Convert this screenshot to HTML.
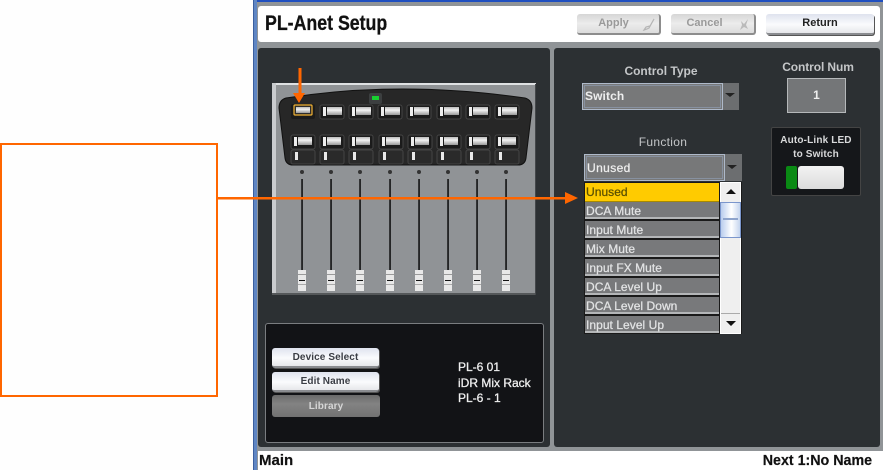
<!DOCTYPE html>
<html><head><meta charset="utf-8"><style>
html,body{margin:0;padding:0;background:#fefefe}
#r{position:relative;width:883px;height:470px;overflow:hidden;background:#fefefe;font-family:"Liberation Sans",sans-serif}
#r div{position:absolute;box-sizing:border-box;white-space:nowrap}
svg{position:absolute;left:0;top:0}
.btn{border-radius:3px;text-align:center;font-weight:bold;font-size:10px;letter-spacing:.1px}
.lite{background:linear-gradient(#dfe3ee,#fafbfd 55%,#e6e7ea);color:#3a3d44;border-bottom:2px solid #8a8c90;box-shadow:1px 1px 0 #555}
.off{background:linear-gradient(#d6d6d6,#ececec 50%,#dcdcdc);color:#9a9a9a;border-bottom:2px solid #8d8d8d;border-right:2px solid #8d8d8d}
.lab{color:#c4c6c8;font-size:12px;font-weight:bold;text-align:center}
.row{left:585px;width:134px;height:17px;background:#78797b;border-bottom:2px solid #b4b6b8;color:#e2e3e4;font-size:12px;-webkit-text-stroke:.25px #e2e3e4;line-height:19px;padding-left:1px;letter-spacing:.05px}
</style></head><body><div id="r">
<div style="left:253px;top:0;width:630px;height:470px;background:#909497"></div>
<div style="left:253px;top:0;width:630px;height:2px;background:#1f4fc0"></div>
<div style="left:253px;top:0;width:4px;height:470px;background:#5f86c4;border-left:1px solid #3b5f9e"></div>
<div style="left:258px;top:6px;width:622px;height:36px;background:#fff;border-radius:3px"></div>
<div style="left:265px;top:11px;font-size:21px;font-weight:bold;color:#111;line-height:26px;-webkit-text-stroke:.3px #111;transform:scaleX(.845);transform-origin:left">PL-Anet Setup</div>
<div class="btn off" style="left:577px;top:14px;width:84px;height:21px;line-height:19px;padding-right:9px;font-size:11px;letter-spacing:0">Apply</div>
<div class="btn off" style="left:671px;top:14px;width:85px;height:21px;line-height:19px;padding-right:16px;font-size:11px;letter-spacing:0">Cancel</div>
<div class="btn lite" style="left:766px;top:14px;width:108px;height:21px;line-height:19px;color:#222;font-size:11px;letter-spacing:0">Return</div>
<svg width="883" height="470">
<path d="M644 30l3-1 2-1 5-9-4 7-4 1z" fill="none" stroke="#b5b5b5" stroke-width="1.2"/>
<path d="M741 21l3 3 4-5-2 6 2 4-4-2-4 3 2-5z" fill="#bbb"/>
</svg>
<div style="left:258px;top:48px;width:292px;height:399px;background:#2c3033;border-radius:3px"></div>
<div style="left:554px;top:48px;width:326px;height:399px;background:#2c3033;border-radius:3px"></div>

<svg width="883" height="470">
<defs>
<linearGradient id="g" x1="0" y1="0" x2="0" y2="1"><stop offset="0" stop-color="#bbb"/><stop offset=".4" stop-color="#f2f2f2"/><stop offset="1" stop-color="#999"/></linearGradient>
<g id="top"><rect x="0" y="0" width="24" height="14" rx="2" fill="#1b1b1b" stroke="#444"/><rect x="3" y="2" width="3" height="9" fill="#eee"/><rect x="7" y="2" width="15" height="8" fill="url(#g)"/></g>
<g id="col"><rect x="291" y="135" width="24" height="14" rx="2" fill="#1b1b1b" stroke="#444"/><rect x="294" y="137" width="3" height="9" fill="#eee"/><rect x="298" y="137" width="14" height="8" fill="url(#g)"/>
<rect x="291" y="150" width="24" height="14" rx="2" fill="#2a2a2a" stroke="#444"/><rect x="295" y="152" width="3" height="8" fill="#e8e8e8"/>
<circle cx="302" cy="172" r="2" fill="#333"/><rect x="301.300" y="179" width="1.500" height="91" fill="#0a0a0a"/>
<rect x="298" y="270" width="8" height="21" fill="#e8e8e8"/><rect x="298" y="274" width="8" height="1" fill="#999"/><rect x="299" y="280" width="6" height="1" fill="#111"/><rect x="298" y="284" width="8" height="1" fill="#aaa"/></g>
</defs>
<rect x="272" y="83" width="264" height="211" fill="#909396"/>
<rect x="272" y="83" width="264" height="2" fill="#dfe1e3"/>
<rect x="272" y="83" width="4" height="211" fill="#c9cbce"/>
<rect x="272" y="293" width="264" height="2" fill="#55585a"/>
<rect x="535" y="84" width="1" height="211" fill="#44474a"/>
<path d="M286 98Q400 80 525 98Q532 100 532 108L526 158Q525 165 518 165H293Q286 165 285 158L279 108Q279 100 286 98Z" fill="#272727" stroke="#111"/>
<rect x="369" y="93" width="13" height="11" rx="2" fill="#3c3f40"/>
<rect x="372" y="96" width="7" height="4" fill="#18d030"/>
<rect x="291" y="104" width="24" height="15" rx="2" fill="#1b1b1b"/>
<rect x="294" y="105" width="18" height="10" rx="1" fill="#2d2d2d" stroke="#f2b233" stroke-width="1.2"/><rect x="296" y="107" width="14" height="6" fill="url(#g)"/>
<use href="#top" x="320" y="105"/><use href="#top" x="349" y="105"/><use href="#top" x="378" y="105"/><use href="#top" x="407" y="105"/><use href="#top" x="437" y="105"/><use href="#top" x="466" y="105"/><use href="#top" x="495" y="105"/>
<use href="#col"/><use href="#col" x="29"/><use href="#col" x="58"/><use href="#col" x="88"/><use href="#col" x="117"/><use href="#col" x="146"/><use href="#col" x="175"/><use href="#col" x="204"/>
</svg>

<div style="left:265px;top:323px;width:279px;height:120px;background:#121316;border:1px solid #7a7d80;border-radius:3px"></div>
<div class="btn lite" style="left:272px;top:348px;width:107px;height:20px;line-height:20px">Device Select</div>
<div class="btn lite" style="left:272px;top:372px;width:107px;height:20px;line-height:20px">Edit Name</div>
<div class="btn" style="left:272px;top:395px;width:108px;height:22px;line-height:24px;background:linear-gradient(#6a6a6a,#838383 40%,#727272);color:#d6d6d6">Library</div>
<div style="left:458px;top:360px;color:#eee;font-size:12px;line-height:15.5px;-webkit-text-stroke:.3px #eee;letter-spacing:0">PL-6 01<br>iDR Mix Rack<br>PL-6 - 1</div>

<div class="lab" style="left:582px;top:64px;width:158px">Control Type</div>
<div style="left:582px;top:83px;width:157px;height:27px;background:#6c6e70"></div>
<div style="left:582px;top:83px;width:141px;height:27px;background:#777879;border:1px solid #aeb9c9;outline:1px solid #8791a0;outline-offset:-3px;color:#eee;font-size:12px;font-weight:bold;line-height:25px;padding-left:2px;letter-spacing:.1px">Switch</div>
<div class="lab" style="left:770px;top:60px;width:96px;letter-spacing:-.1px">Control Num</div>
<div style="left:787px;top:78px;width:59px;height:35px;background:#747678;border:1px solid #b5b8ba;color:#eee;font-size:12px;font-weight:bold;text-align:center;line-height:33px">1</div>
<div class="lab" style="left:584px;top:135px;width:158px;font-weight:normal;letter-spacing:.3px">Function</div>
<div style="left:584px;top:154px;width:158px;height:27px;background:#6c6e70"></div>
<div style="left:584px;top:154px;width:141px;height:27px;background:#777879;border:1px solid #aeb9c9;outline:1px solid #8791a0;outline-offset:-3px;color:#eee;font-size:12px;line-height:26px;padding-left:2px;-webkit-text-stroke:.25px #eee;letter-spacing:.4px">Unused</div>
<div style="left:771px;top:127px;width:90px;height:69px;background:#15171a;border:1px solid #444;border-radius:2px"></div>
<div style="left:771px;top:134px;width:90px;text-align:center;color:#d8d9da;font-size:10px;font-weight:bold;line-height:14px;letter-spacing:.15px">Auto-Link LED<br>to Switch</div>
<div style="left:786px;top:166px;width:11px;height:23px;background:#0a8a14;border-radius:2px"></div>
<div style="left:798px;top:166px;width:46px;height:23px;background:linear-gradient(#f2f2f2,#dcdcdc);border-radius:3px"></div>

<div style="left:584px;top:182px;width:158px;height:152px;background:#1a1a1a"></div>
<div class="row" style="top:183px;height:19px;background:#ffcb00;color:#5a5000;-webkit-text-stroke:.25px #5a5000;border-bottom:1px solid #a88a00;line-height:18px">Unused</div>
<div class="row" style="top:202px">DCA Mute</div>
<div class="row" style="top:221px">Input Mute</div>
<div class="row" style="top:240px">Mix Mute</div>
<div class="row" style="top:259px">Input FX Mute</div>
<div class="row" style="top:278px">DCA Level Up</div>
<div class="row" style="top:297px">DCA Level Down</div>
<div class="row" style="top:316px">Input Level Up</div>
<div style="left:720px;top:182px;width:21px;height:152px;background:#efefef;border:1px solid #fff"></div>
<div style="left:720px;top:202px;width:21px;height:36px;background:linear-gradient(90deg,#b9cdee,#fff 55%,#c5d5ee);border:1px solid #7b96cc"></div>
<div style="left:723px;top:218px;width:15px;height:2px;background:#8ea4cc"></div>
<svg width="883" height="470">
<path d="M726 194l5-5 5 5zM726 321h10l-5 5z" fill="#111"/>
<rect x="721" y="313" width="19" height="1" fill="#aaa"/>
<path d="M725 93h10l-5 4zM727 165h10l-5 4z" fill="#222"/>
<g fill="#ff6600">
<rect x="218" y="197" width="348" height="2.5"/>
<path d="M565 192l13 6-13 6z"/>
<rect x="298.500" y="68" width="3" height="26"/>
<path d="M293 93h12l-6 10z"/>
</g>
<rect x="1" y="144" width="216" height="252" fill="none" stroke="#ff6600" stroke-width="2"/>
</svg>
<div style="left:258px;top:451px;width:625px;height:19px;background:#fff"></div>
<div style="left:259px;top:452px;font-size:15px;font-weight:bold;color:#111;line-height:18px;-webkit-text-stroke:.2px #111">Main</div>
<div style="right:11px;top:452px;font-size:15px;font-weight:bold;color:#111;line-height:18px;-webkit-text-stroke:.2px #111;transform:scaleX(.95);transform-origin:right">Next 1:No Name</div>
</div></body></html>
